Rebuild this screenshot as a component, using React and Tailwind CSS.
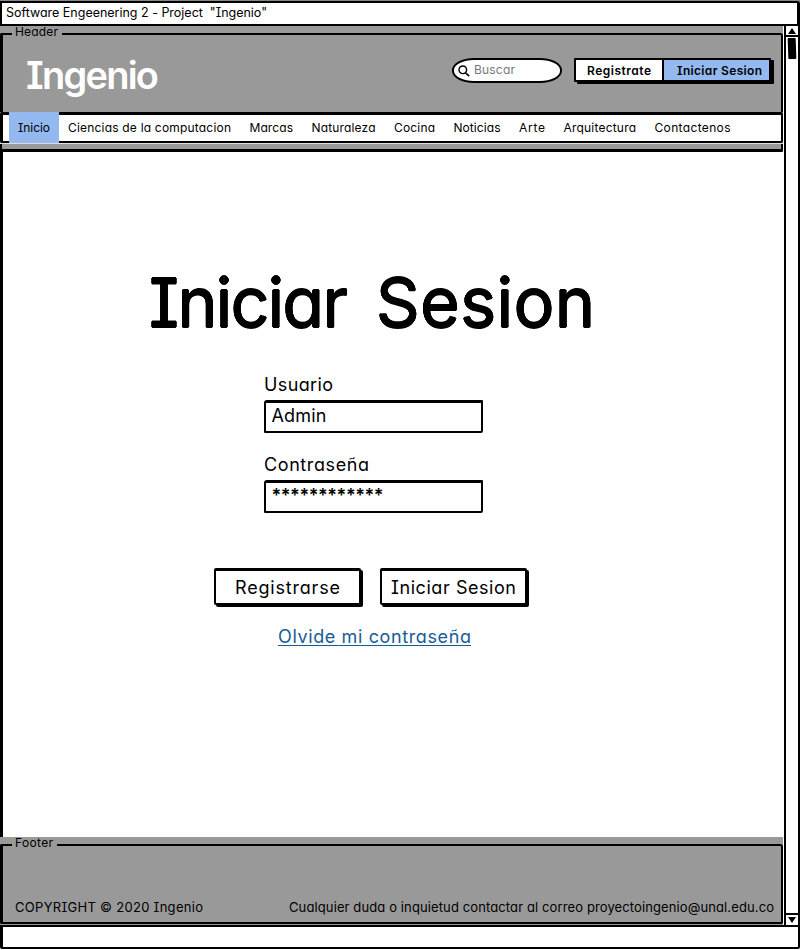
import { useLayoutEffect, useRef } from "react";

// Spreads the letters of one line so that they fill the width of the box.
function Fit({ className = "", children }) {
  const box = useRef(null);
  const line = useRef(null);
  useLayoutEffect(() => {
    const el = line.current;
    el.style.letterSpacing = "0px";
    const gap =
      (box.current.getBoundingClientRect().width - el.getBoundingClientRect().width) /
      (children.length - 1);
    el.style.letterSpacing = `${gap}px`;
  }, [children]);
  return (
    <span ref={box} className={`block shrink-0 whitespace-pre ${className}`}>
      <span ref={line}>{children}</span>
    </span>
  );
}

const links = [
  ["Ciencias de la computacion", "w-[163px]"],
  ["Marcas", "w-[43.5px]"],
  ["Naturaleza", "w-[64px]"],
  ["Cocina", "w-[41px]"],
  ["Noticias", "w-[47px]"],
  ["Arte", "w-[26px]"],
  ["Arquitectura", "w-[72.5px]"],
  ["Contactenos", "w-[76px]"],
];

function TitleBar() {
  return (
    <div className="h-[26px] shrink-0 bg-[#888] pt-px">
      <div className="h-[25px] rounded-tr-[3px] border-2 border-r-[3px] border-black bg-white pl-1">
        <Fit className="w-[261px] text-[12.5px] leading-[20px]">{'Software Engeenering 2 - Project  "Ingenio"'}</Fit>
      </div>
    </div>
  );
}

function GroupLine({ label, width }) {
  return (
    <div className="flex h-[14px] items-end">
      <div className="h-[7px] w-3 rounded-tl-[2px] border-t-2 border-l-[3px] border-black" />
      <Fit className={`mb-px ml-[3px] text-[12px] leading-[14px] ${width}`}>{label}</Fit>
      <div className="ml-1 h-[7px] flex-1 rounded-tr-[3px] border-t-2 border-r-2 border-black" />
    </div>
  );
}

function Search() {
  return (
    <div className="flex h-[25px] w-[110px] items-center rounded-[22px/12px] border-2 border-black bg-white pl-[4px]">
      <svg className="h-3 w-3" viewBox="0 0 12 12" fill="none" stroke="black" strokeLinecap="round">
        <circle cx="4.8" cy="4.8" r="3.8" strokeWidth="1.4" />
        <path d="M7.8 8 L10.6 10.6" strokeWidth="1.7" />
      </svg>
      <Fit className="-mt-[2px] ml-1 w-[41px] text-[12px] leading-4 text-[#77777f]">Buscar</Fit>
    </div>
  );
}

function Header() {
  return (
    <header className="flex h-[126px] shrink-0 flex-col bg-[#999]">
      <GroupLine label="Header" width="w-[43px]" />
      <div className="flex h-[72px] border-r-2 border-l-[3px] border-black pl-[23px]">
        <Fit className="mt-[10px] w-[133px] text-[38px] leading-[50px] font-semibold text-white">Ingenio</Fit>
        <div className="mt-[18px] ml-[293px]">
          <Search />
        </div>
        <div className="mt-[18px] ml-3 flex h-[24px] w-[197px] rounded-[1px] border-2 border-black bg-white shadow-[3px_2px_0_#000]">
          <div className="w-[88px] border-r-2 border-black pl-[11px]">
            <Fit className="w-[64px] text-[12px] leading-[21px] font-semibold">Registrate</Fit>
          </div>
          <div className="flex-1 bg-[#93b9f0] pl-[13px]">
            <Fit className="w-[85px] text-[12px] leading-[21px] font-semibold">Iniciar Sesion</Fit>
          </div>
        </div>
      </div>
      <nav className="flex h-[31px] gap-[18.5px] rounded-[2px] border-t-[3px] border-r-2 border-b-2 border-l-[3px] border-black bg-white pl-[6px] text-[12px] leading-[26px]">
        <div className="-mt-[3px] -mr-[9.5px] h-[32px] w-[50px] shrink-0 bg-[#93b9f0] pt-[3px] pl-[9px]">
          <Fit className="w-[32px]">Inicio</Fit>
        </div>
        {links.map(([name, width]) => (
          <Fit key={name} className={width}>{name}</Fit>
        ))}
      </nav>
      <div className="h-px bg-[#ddd]" />
      <div className="h-2 rounded-br-[2px] border-x-2 border-b-[3px] border-black" />
    </header>
  );
}

function Field({ label, labelWidth, value, valueClass }) {
  return (
    <label className="block h-[80px]">
      <Fit className={`text-[18px] leading-[26px] ${labelWidth}`}>{label}</Fit>
      <div className="mt-[2px] h-[33px] w-[219px] rounded-[3px_1px_2px_1px] border-2 border-t-[3px] border-black pl-[5.5px]">
        <Fit className={`text-[18px] ${valueClass}`}>{value}</Fit>
      </div>
    </label>
  );
}

function Button({ children, width }) {
  return (
    <button className="flex h-[37px] w-[147px] justify-center rounded-[2px] border-2 border-t-[3px] border-black bg-white text-[18px] leading-[34px] shadow-[2px_2px_0_#000]">
      <Fit className={`text-left ${width}`}>{children}</Fit>
    </button>
  );
}

function Login() {
  return (
    <main className="flex h-[685px] shrink-0 flex-col border-l-[3px] border-black bg-white pl-[146px]">
      <h1 className="mt-[110px] flex gap-[28px] text-[68px] leading-[80px] [text-shadow:0.6px_0_#000,-0.6px_0_#000,0_0.6px_#000,0_-0.6px_#000,0.4px_0.4px_#000,-0.4px_-0.4px_#000,0.4px_-0.4px_#000,-0.4px_0.4px_#000]">
        <Fit className="w-[199px]">Iniciar</Fit>
        <Fit className="w-[219px]">Sesion</Fit>
      </h1>
      <form className="mt-[30px] ml-[115px]">
        <Field label="Usuario" labelWidth="w-[69px]" value="Admin" valueClass="w-[55px] leading-[26px]" />
        <Field label="Contraseña" labelWidth="w-[105px]" value="************" valueClass="w-[112px] leading-[26px] font-semibold" />
      </form>
      <div className="mt-[36px] ml-[65px] flex gap-[19px]">
        <Button width="w-[105px]">Registrarse</Button>
        <Button width="w-[125px]">Iniciar Sesion</Button>
      </div>
      <a className="mt-5 ml-[129px] h-[21px] w-[193px] border-b-[1.5px] border-[#175c97] text-[18px] leading-[24px] text-[#175c97]">
        <Fit className="w-[193px]">Olvide mi contraseña</Fit>
      </a>
    </main>
  );
}

function Footer() {
  return (
    <footer className="flex h-[88px] shrink-0 flex-col bg-[#999]">
      <GroupLine label="Footer" width="w-[38px]" />
      <div className="flex h-[73px] items-end justify-between rounded-b-[2px] border-r-2 border-b-2 border-l-[3px] border-black pr-[7px] pb-[5px] pl-[12px] text-[13px] leading-5">
        <Fit className="w-[188px]">COPYRIGHT © 2020 Ingenio</Fit>
        <Fit className="w-[485px]">Cualquier duda o inquietud contactar al correo proyectoingenio@unal.edu.co</Fit>
      </div>
    </footer>
  );
}

function ScrollBar() {
  return (
    <div className="ml-px flex w-[16px] flex-col border-r-2 border-l-2 border-black bg-white">
      <div className="flex h-[11px] items-center justify-center border-b-2 border-black">
        <svg className="h-[6px] w-2" viewBox="0 0 8 6"><path d="M4 0 L8 6 H0 Z" /></svg>
      </div>
      <div className="mt-px ml-[2px] h-[21px] w-[8px] rotate-[-2deg] rounded-[1px] bg-black" />
      <div className="flex-1" />
      <div className="flex h-[12px] items-center justify-center border-t-2 border-black">
        <svg className="h-[6px] w-2" viewBox="0 0 8 6"><path d="M0 0 H8 L4 6 Z" /></svg>
      </div>
    </div>
  );
}

export default function App() {
  return (
    <div className="flex h-[950px] w-[800px] flex-col overflow-hidden bg-white font-['Inter','Open_Sans',sans-serif] text-black [font-feature-settings:'cv11','cv08']">
      <TitleBar />
      <div className="flex h-[899px] shrink-0">
        <div className="flex w-[783px] flex-col">
          <Header />
          <Login />
          <Footer />
        </div>
        <ScrollBar />
      </div>
      <div className="h-[24px] shrink-0 rounded-b-[2px] border-t-2 border-r-2 border-b-2 border-l-[3px] border-black bg-white" />
    </div>
  );
}
